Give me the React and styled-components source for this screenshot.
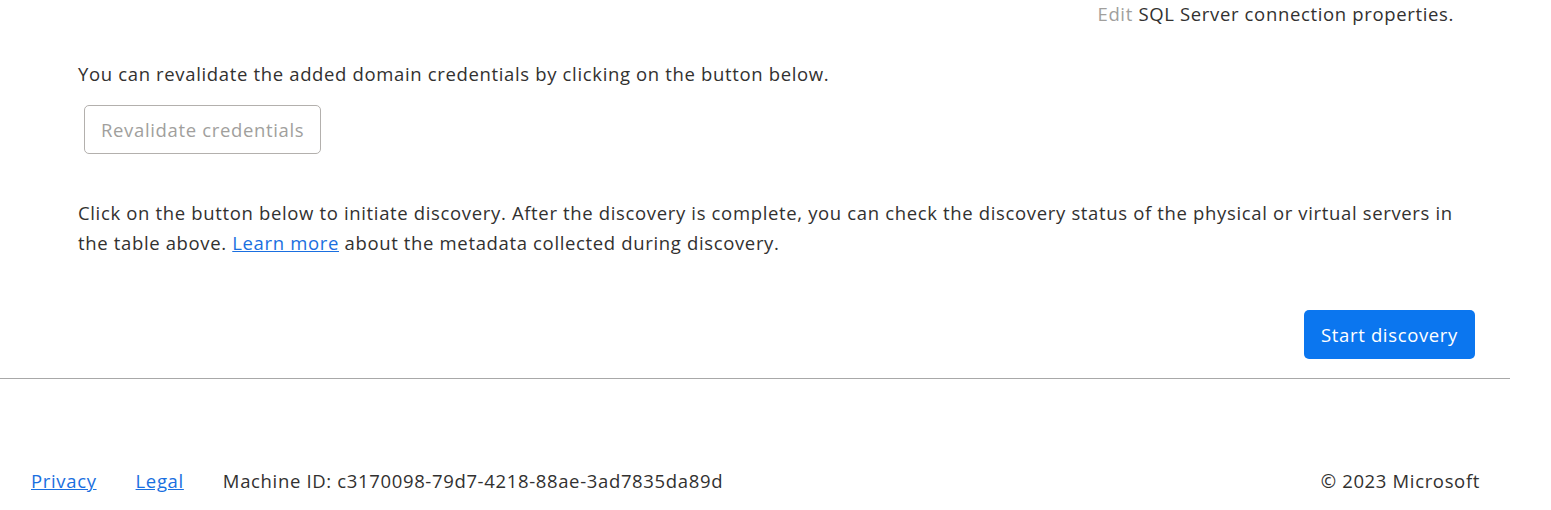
import styled, { createGlobalStyle } from 'styled-components';

const GlobalStyle = createGlobalStyle`
  body {
    margin: 0;
    background: #fff;
    font-family: 'Open Sans', 'Noto Sans', sans-serif;
    color: #323130;
  }
`;

function App() {
  return (
    <Page>
      <GlobalStyle />
      <Main>
        <EditLine>
          <Muted>Edit</Muted> SQL Server connection properties.
        </EditLine>
        <Text>
          You can revalidate the added domain credentials by clicking on the
          button below.
        </Text>
        <GhostButton disabled>Revalidate credentials</GhostButton>
        <Text $top={44}>
          Click on the button below to initiate discovery. After the discovery
          is complete, you can check the discovery status of the physical or
          virtual servers in the table above. <Link href="#">Learn more</Link>{' '}
          about the metadata collected during discovery.
        </Text>
        <Actions>
          <PrimaryButton>Start discovery</PrimaryButton>
        </Actions>
      </Main>
      <Divider />
      <Footer>
        <FooterLeft>
          <Link href="#">Privacy</Link>
          <Link href="#">Legal</Link>
          <span>Machine ID: c3170098-79d7-4218-88ae-3ad7835da89d</span>
        </FooterLeft>
        <span>© 2023 Microsoft</span>
      </Footer>
    </Page>
  );
}

const Page = styled.div`
  width: 1510px;
  font-size: 18.5px;
  letter-spacing: 0.65px;
  line-height: 30px;
`;

const Main = styled.main`
  display: flex;
  flex-direction: column;
  align-items: flex-start;
  padding: 0 35px 0 78px;
`;

const EditLine = styled.div`
  align-self: flex-end;
  margin-right: 21px;
  line-height: 28px;
`;

const Muted = styled.span`
  color: #a19f9d;
`;

const Text = styled.p`
  margin: ${props => props.$top || 31}px 0 0;
  max-width: 1375px;
`;

const GhostButton = styled.button`
  margin: 16px 0 0 6px;
  height: 49px;
  padding: 0 16px;
  font: inherit;
  letter-spacing: inherit;
  color: #a19f9d;
  background: #fff;
  border: 1px solid #b3b0ad;
  border-radius: 5px;
`;

const Link = styled.a`
  color: #1a6fe0;
  text-decoration: underline;
`;

const Actions = styled.div`
  align-self: stretch;
  display: flex;
  justify-content: flex-end;
  margin-top: 52px;
`;

const PrimaryButton = styled.button`
  height: 49px;
  padding: 0 17px;
  font: inherit;
  letter-spacing: inherit;
  color: #fff;
  background: #0b76ef;
  border: none;
  border-radius: 5px;
`;

const Divider = styled.hr`
  margin: 19px 0 0;
  border: none;
  border-top: 1.5px solid #a8a8a8;
`;

const Footer = styled.footer`
  display: flex;
  justify-content: space-between;
  align-items: center;
  padding: 87px 30px 0 31px;
`;

const FooterLeft = styled.div`
  display: flex;
  gap: 39px;
`;

export default App;
